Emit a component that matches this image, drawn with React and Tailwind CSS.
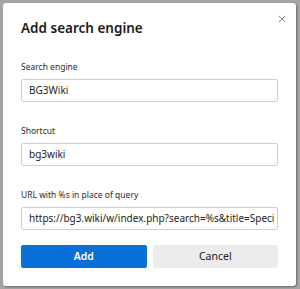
import { X } from 'lucide-react';

const fields = [
  { label: 'Search engine', value: 'BG3Wiki' },
  { label: 'Shortcut', value: 'bg3wiki' },
  { label: 'URL with %s in place of query', value: 'https://bg3.wiki/w/index.php?search=%s&title=Speci' },
];

function App() {
  return (
    <div className="w-[300px] h-[289px] bg-[#a4a4a4] overflow-hidden font-['Noto_Sans',sans-serif] text-[#1b1b1b]">
      <div className="ml-[3px] mt-[3px] w-[293px] h-[283px] bg-white rounded-[3px] shadow-[1px_1px_2px_rgba(0,0,0,0.35)] px-[18px] pt-[15px]">
        <div className="flex justify-between items-start">
          <h1 className="text-[13.5px] leading-[20px] font-semibold">Add search engine</h1>
          <button className="-mr-[10px] mt-[-5px] text-[#444]">
            <X size={12} strokeWidth={1.3} />
          </button>
        </div>

        <div className="mt-[22px] flex flex-col gap-[22px]">
          {fields.map((f) => (
            <div key={f.label} className="flex flex-col">
              <label className="text-[8.5px] leading-[13px] text-[#2b2b2b]">{f.label}</label>
              <div className="mt-[6px] h-[23px] border border-[#cfcfcf] rounded-[2px] pl-[7px] pr-[4px] flex items-center overflow-hidden whitespace-nowrap text-[10px] text-[#222]">
                {f.value}
              </div>
            </div>
          ))}
        </div>

        <div className="mt-[15px] flex gap-[6px]">
          <button className="flex-1 h-[23px] bg-[#0a6fd6] text-white text-[10.5px] font-semibold rounded-[2px]">Add</button>
          <button className="flex-1 h-[23px] bg-[#ececec] text-[#222] text-[10.5px] rounded-[2px]">Cancel</button>
        </div>
      </div>
    </div>
  );
}

export default App;
